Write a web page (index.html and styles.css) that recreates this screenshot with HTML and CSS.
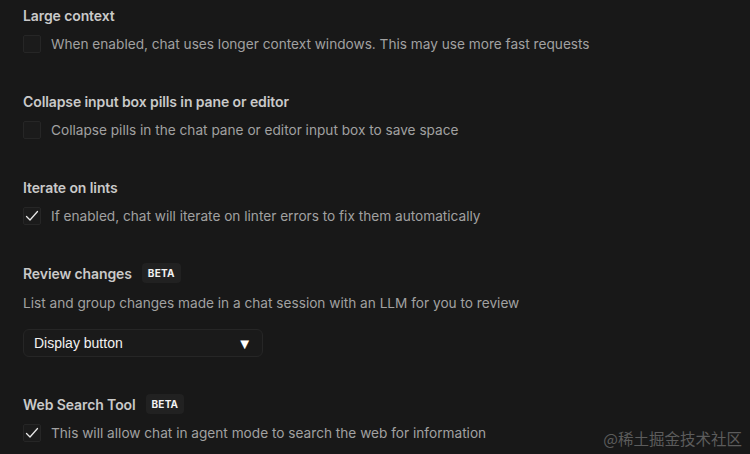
FILE: index.html
```html
<!DOCTYPE html>
<html>
<head>
<meta charset="utf-8">
<link rel="stylesheet" href="styles.css">
</head>
<body>
<div class="page">
  <section class="setting">
    <div class="title">Large context</div>
    <label class="row">
      <span class="box"></span>
      <span class="desc">When enabled, chat uses longer context windows. This may use more fast requests</span>
    </label>
  </section>
  <section class="setting">
    <div class="title">Collapse input box pills in pane or editor</div>
    <label class="row">
      <span class="box"></span>
      <span class="desc">Collapse pills in the chat pane or editor input box to save space</span>
    </label>
  </section>
  <section class="setting">
    <div class="title">Iterate on lints</div>
    <label class="row">
      <span class="box"><svg width="18" height="18" viewBox="0 0 18 18"><path d="M3.5 9.5 L7 13 L14.5 4.5" fill="none" stroke="#e6e6e6" stroke-width="1.3" stroke-linecap="round" stroke-linejoin="round"/></svg></span>
      <span class="desc">If enabled, chat will iterate on linter errors to fix them automatically</span>
    </label>
  </section>
  <section class="setting review">
    <div class="title">Review changes <span class="badge">BETA</span></div>
    <div class="desc plain">List and group changes made in a chat session with an LLM for you to review</div>
    <div class="select"><span>Display button</span><span class="arrow">▼</span></div>
  </section>
  <section class="setting">
    <div class="title">Web Search Tool <span class="badge">BETA</span></div>
    <label class="row">
      <span class="box"><svg width="18" height="18" viewBox="0 0 18 18"><path d="M3.5 9.5 L7 13 L14.5 4.5" fill="none" stroke="#e6e6e6" stroke-width="1.3" stroke-linecap="round" stroke-linejoin="round"/></svg></span>
      <span class="desc">This will allow chat in agent mode to search the web for information</span>
    </label>
  </section>
  <div class="watermark">@稀土掘金技术社区</div>
</div>
</body>
</html>
```
FILE: styles.css
```css
html, body {
  margin: 0;
  padding: 0;
  background: #181818;
  height: 100%;
  overflow: hidden;
}
.page {
  position: relative;
  height: 454px;
  padding: 5px 23px 0 23px;
  box-sizing: border-box;
  font-family: Inter, "Liberation Sans", sans-serif;
}
.setting {
  display: flex;
  flex-direction: column;
  margin-bottom: 38px;
}
.title {
  display: flex;
  align-items: center;
  gap: 10px;
  height: 20px;
  font-size: 14px;
  font-weight: 600;
  color: #c9c9c9;
  letter-spacing: -0.1px;
}
.badge {
  display: inline-flex;
  align-items: center;
  height: 20px;
  padding: 0 6px;
  background: #212121;
  border-radius: 4px;
  color: #f2f2f2;
  font-size: 10px;
  font-weight: 700;
  letter-spacing: 0.2px;
}
.row {
  display: flex;
  align-items: center;
  gap: 10px;
  margin-top: 10px;
  height: 18px;
}
.box {
  flex: none;
  width: 18px;
  height: 18px;
  box-sizing: border-box;
  border: 1px solid #262626;
  border-radius: 2px;
  background: #1b1b1b;
  display: flex;
}
.box svg {
  margin: -1px;
}
.desc {
  font-size: 13.65px;
  color: #a1a1a1;
  line-height: 18px;
  white-space: nowrap;
}
.desc.plain {
  margin-top: 10px;
  line-height: 20px;
}
.review {
  margin-bottom: 37px;
}
.select {
  margin-top: 16px;
  width: 240px;
  height: 28px;
  box-sizing: border-box;
  border: 1px solid #262626;
  border-radius: 6px;
  background: #1a1a1a;
  display: flex;
  align-items: center;
  justify-content: space-between;
  padding: 0 10px 0 10px;
  font-family: "Liberation Sans", Arial, sans-serif;
  font-size: 14px;
  color: #f2f2f2;
}
.arrow {
  font-size: 15px;
  color: #ffffff;
}
.watermark {
  position: absolute;
  right: 8px;
  bottom: 5px;
  font-family: "Noto Sans CJK SC", sans-serif;
  font-size: 15.5px;
  color: #5c5c5c;
}
```
